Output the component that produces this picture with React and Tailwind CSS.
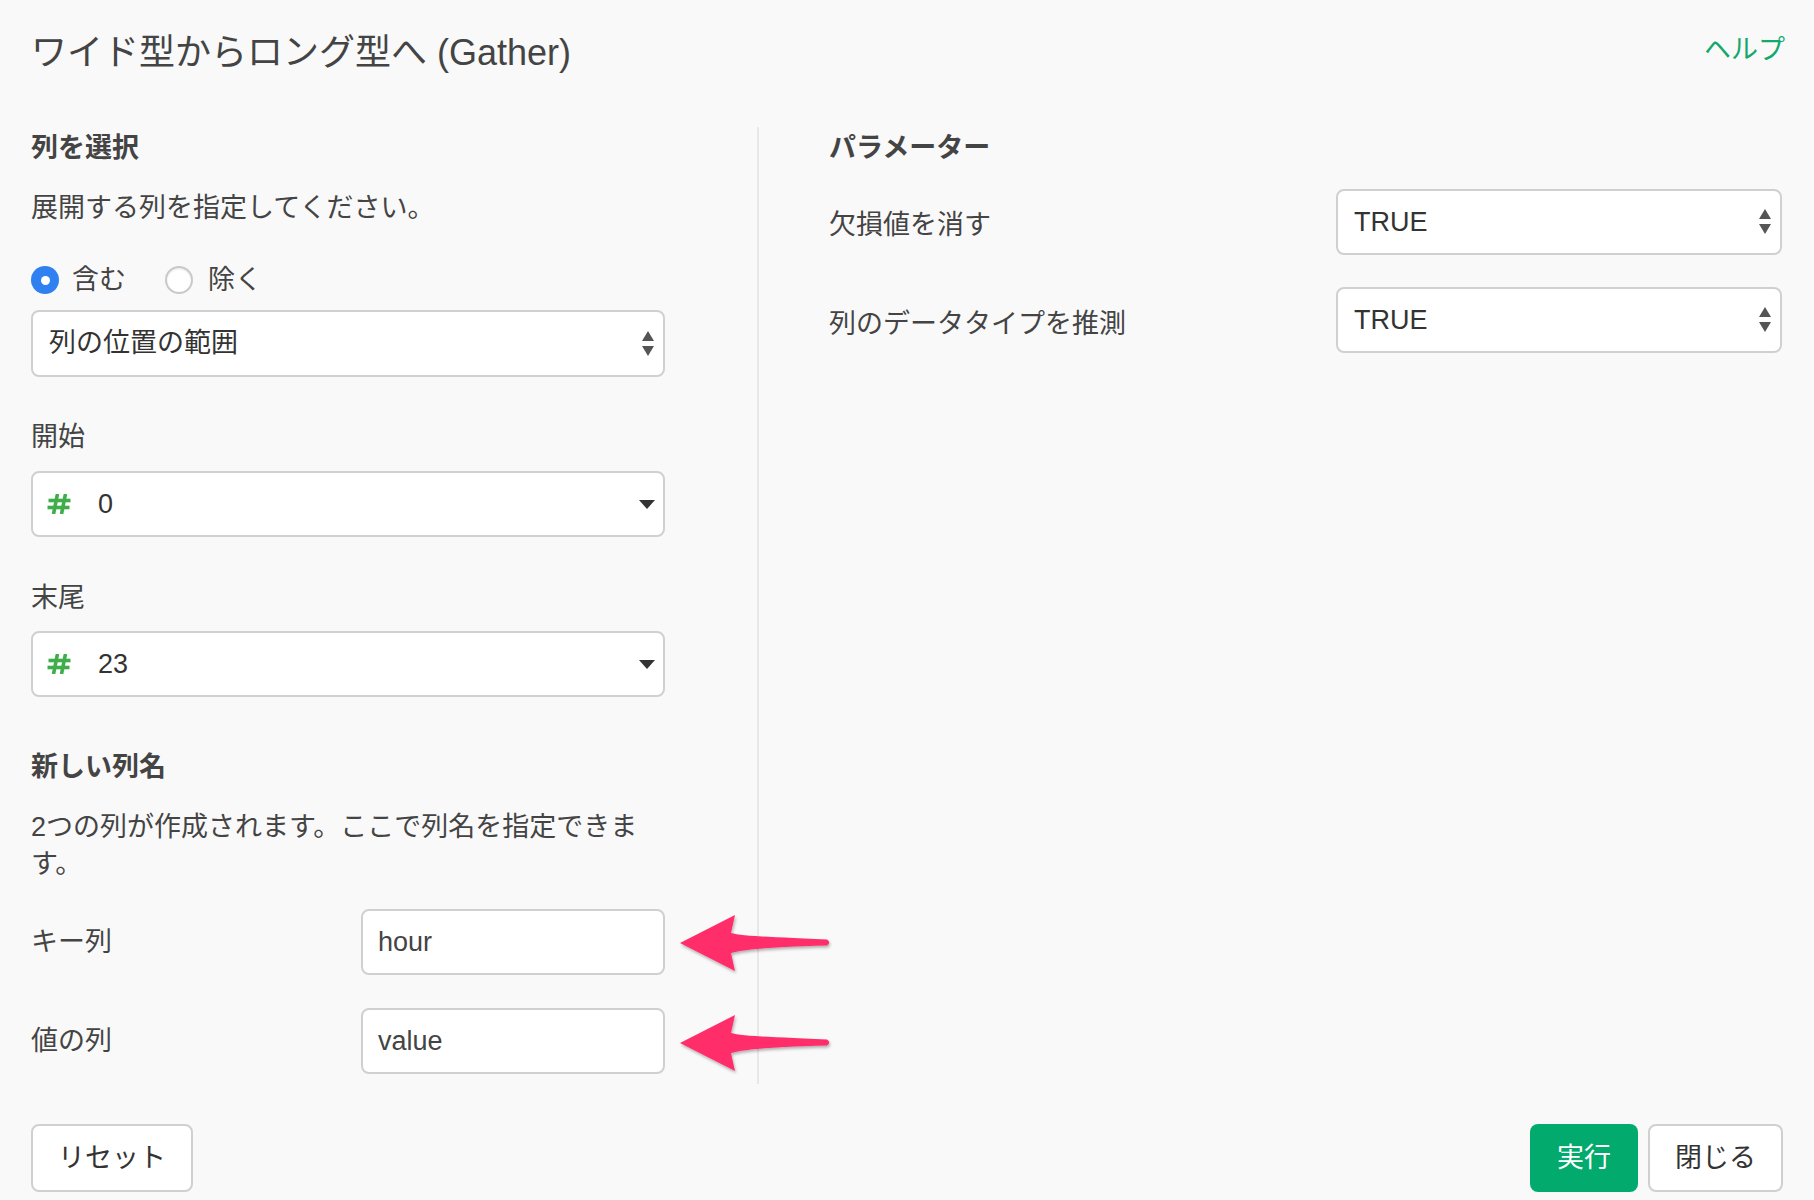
import React from 'react';

const font = { fontFamily: '"Liberation Sans", "Noto Sans CJK JP", sans-serif' };

function UpDown() {
    return (
        <svg width="14" height="26" viewBox="0 0 14 26" className="shrink-0">
            <path d="M7 0 L13 10 L1 10 Z" fill="#555" />
            <path d="M1 15 L13 15 L7 25 Z" fill="#555" />
        </svg>
    );
}

function Caret() {
    return (
        <svg width="16" height="9" viewBox="0 0 16 9" className="shrink-0">
            <path d="M0 0 L16 0 L8 9 Z" fill="#333" />
        </svg>
    );
}

// numeric column marker
function Hash() {
    return (
        <svg width="24" height="20" viewBox="0 0 24 20" className="shrink-0 mr-[27px]">
            <g stroke="#3fae4a" strokeWidth="3.6" strokeLinecap="butt">
                <path d="M10.5 0 L6.5 20" />
                <path d="M18.5 0 L14.5 20" />
                <path d="M1.5 6.5 L23.5 6.5" />
                <path d="M0.5 13.5 L22.5 13.5" />
            </g>
        </svg>
    );
}

function NativeSelect({ value, className = '' }) {
    return (
        <div className={`flex items-center justify-between h-[66px] bg-white border-2 border-[#d0d0d0] rounded-[8px] pl-[16px] pr-[8px] ${className}`}>
            <span className="text-[27px] text-[#333] leading-none">{value}</span>
            <UpDown />
        </div>
    );
}

function ColumnPicker({ value }) {
    return (
        <div className="flex items-center h-[66px] bg-white border-2 border-[#d0d0d0] rounded-[8px] pl-[14px] pr-[8px]">
            <Hash />
            <span className="flex-1 text-[27px] text-[#333] leading-none">{value}</span>
            <Caret />
        </div>
    );
}

function TextBox({ value }) {
    return (
        <div className="flex items-center h-[66px] w-[304px] bg-white border-2 border-[#d0d0d0] rounded-[8px] pl-[15px]">
            <span className="text-[27px] text-[#444] leading-none">{value}</span>
        </div>
    );
}

function PinkArrow({ top }) {
    return (
        <svg width="160" height="66" viewBox="0 0 160 66" className="absolute left-[679px]" style={{ top }}>
            <defs>
                <filter id={`sh${top}`} x="-10%" y="-20%" width="130%" height="150%">
                    <feDropShadow dx="1" dy="2" stdDeviation="1.6" floodColor="#000" floodOpacity="0.3" />
                </filter>
            </defs>
            <path
                d="M1 29 L56 1 L52 19 C62 22 90 23 148 25.5 Q152.5 28.5 148 31.5 C95 33 66 35 52 39 L56 57 Z"
                fill="#ff2e6b"
                filter={`url(#sh${top})`}
            />
        </svg>
    );
}

export default function App() {
    return (
        <div className="relative w-full min-h-[1200px] bg-[#f9f9f9] text-[#444]" style={font}>
            {/* header */}
            <div className="flex items-start justify-between h-[127px] pl-[31px] pr-[29px]">
                <h1 className="pt-[28px] text-[36px] leading-[50px] text-[#444]">ワイド型からロング型へ (Gather)</h1>
                <a className="pt-[30px] text-[27px] leading-[40px] text-[#13a86d]">ヘルプ</a>
            </div>

            {/* body */}
            <div className="flex pl-[31px]">
                <div className="w-[634px] pb-[10px]">
                    <div className="text-[27px] font-bold leading-[42px] text-[#444]">列を選択</div>
                    <p className="mt-[18px] text-[27px] leading-[42px]">展開する列を指定してください。</p>

                    <div className="mt-[30px] flex items-center h-[42px] text-[27px]">
                        <span className="flex items-center justify-center w-[28px] h-[28px] rounded-full bg-[#2f80f0]">
                            <span className="w-[9px] h-[9px] rounded-full bg-white" />
                        </span>
                        <span className="ml-[13px]">含む</span>
                        <span className="ml-[39px] w-[28px] h-[28px] rounded-full bg-white border-2 border-[#c9c9c9] shadow-[inset_0_1px_2px_rgba(0,0,0,0.1)]" />
                        <span className="ml-[15px]">除く</span>
                    </div>

                    <NativeSelect value="列の位置の範囲" className="mt-[9px] h-[67px]" />

                    <div className="mt-[39px] text-[27px] leading-[42px]">開始</div>
                    <div className="mt-[13px]"><ColumnPicker value="0" /></div>

                    <div className="mt-[40px] text-[27px] leading-[42px]">末尾</div>
                    <div className="mt-[12px]"><ColumnPicker value="23" /></div>

                    <div className="mt-[49px] text-[27px] font-bold leading-[42px]">新しい列名</div>
                    <p className="mt-[21px] text-[27px] leading-[37px]">2つの列が作成されます。ここで列名を指定できます。</p>

                    <div className="mt-[26px] flex items-center">
                        <span className="w-[330px] text-[27px]">キー列</span>
                        <TextBox value="hour" />
                    </div>
                    <div className="mt-[33px] flex items-center">
                        <span className="w-[330px] text-[27px]">値の列</span>
                        <TextBox value="value" />
                    </div>
                </div>

                <div className="ml-[92px] flex-1 border-l-2 border-[#e8e8e8] pl-[70px] pr-[32px]">
                    <div className="text-[27px] font-bold leading-[42px] text-[#444]">パラメーター</div>
                    <div className="mt-[20px] flex items-center">
                        <span className="w-[507px] text-[27px] pt-[6px]">欠損値を消す</span>
                        <NativeSelect value="TRUE" className="flex-1" />
                    </div>
                    <div className="mt-[32px] flex items-center">
                        <span className="w-[507px] text-[27px] pt-[8px]">列のデータタイプを推測</span>
                        <NativeSelect value="TRUE" className="flex-1" />
                    </div>
                </div>
            </div>

            {/* footer */}
            <div className="mt-[40px] flex items-center justify-between pl-[31px] pr-[31px]">
                <button className="h-[68px] w-[162px] bg-white border-2 border-[#d0d0d0] rounded-[8px] text-[27px] text-[#333]">リセット</button>
                <div className="flex items-center gap-[10px]">
                    <button className="h-[68px] w-[108px] bg-[#03aa6d] rounded-[8px] text-[27px] text-white">実行</button>
                    <button className="h-[68px] w-[135px] bg-white border-2 border-[#d0d0d0] rounded-[8px] text-[27px] text-[#333]">閉じる</button>
                </div>
            </div>

            <PinkArrow top={914} />
            <PinkArrow top={1014} />
        </div>
    );
}
